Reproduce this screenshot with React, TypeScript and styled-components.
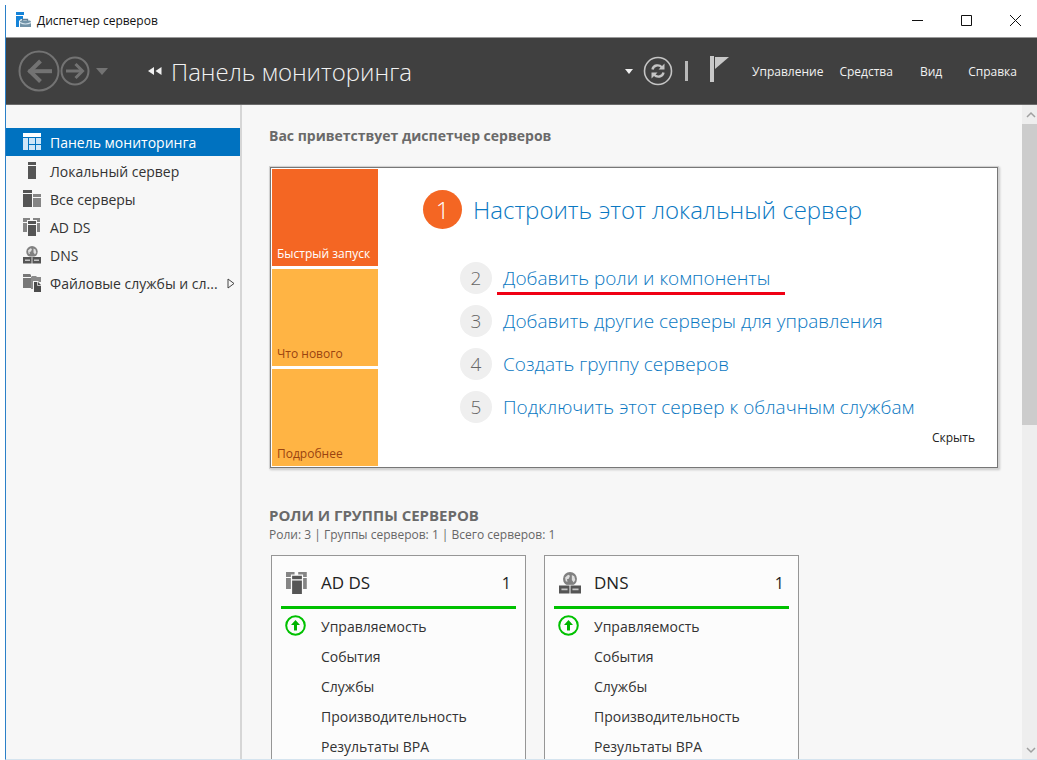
import React from 'react';
import styled, { createGlobalStyle, css } from 'styled-components';

const GlobalStyle = createGlobalStyle`
  *, *::before, *::after { box-sizing: border-box; }
  body { margin: 0; background: #fff; overflow: hidden; }
  body, button { font-family: "Open Sans", "Noto Sans", sans-serif; }
  button { padding: 0; border: 0; background: none; color: inherit; cursor: pointer; }
  a { text-decoration: none; }
  h1, h2, p, ul, ol { margin: 0; padding: 0; }
  ul, ol { list-style: none; }
  svg { display: block; flex: none; }
`;

const Desktop = styled.div`
  height: 100vh;
  padding: 5px 0 0 5px;
`;

const AppWindow = styled.div`
  height: 100%;
  display: flex;
  flex-direction: column;
  border-left: 1px solid #2b80c8;
  border-bottom: 1px solid #d5e4ef;
`;

const TitleBar = styled.header`
  flex: none;
  height: 33px;
  display: flex;
  align-items: center;
  padding: 0 16px 2px 9px;
  border-bottom: 1px solid #9a9a9a;
  color: #111;
  font-size: 12px;
`;

const TitleText = styled.span`
  flex: 1;
  margin-left: 6px;
`;

const WindowButton = styled.button`
  width: 12px;
  height: 30px;
  margin-left: 37px;
  display: grid;
  place-items: center;
`;

const Toolbar = styled.div`
  flex: none;
  height: 67px;
  display: flex;
  align-items: center;
  padding: 0 20px 0 12px;
  background: #404040;
  border-bottom: 1px solid #6b6b6b;
  color: #f2f2f2;
`;

const PageTitle = styled.h1`
  flex: 1;
  margin-left: 9px;
  padding-top: 2px;
  font-size: 24px;
  line-height: 32px;
  font-weight: 300;
  white-space: nowrap;
`;

const IconButton = styled.button<{ $gap?: number }>`
  margin-left: ${(p) => p.$gap ?? 0}px;
`;

const Divider = styled.span`
  width: 3px;
  height: 20px;
  margin: 0 22px 0 12px;
  background: #b9b9b9;
`;

const MenuBar = styled.nav`
  display: flex;
  margin-left: 23px;
  padding-top: 2px;
`;

const MenuButton = styled.button<{ $gap?: number }>`
  margin-left: ${(p) => p.$gap ?? 0}px;
  font-size: 12px;
  line-height: 20px;
`;

const Body = styled.div`
  flex: 1;
  min-height: 0;
  display: flex;
  background: #f7f7f7;
`;

const Sidebar = styled.nav`
  flex: none;
  width: 236px;
  padding-top: 23px;
  border-right: 2px solid #d6d6d6;
`;

const NavLink = styled.a<{ $active?: boolean }>`
  height: 28px;
  display: grid;
  grid-template-columns: 18px 1fr auto;
  column-gap: 9px;
  align-items: center;
  padding: 0 5px 0 17px;
  font-size: 14px;
  white-space: nowrap;
  color: #333;
  ${(p) => p.$active && css`
    margin-bottom: 1px;
    background: #0072c0;
    color: #fff;
  `}
`;

const Content = styled.main`
  flex: 1;
  min-width: 0;
  overflow: hidden;
  padding: 20px 24px 0 27px;
`;

const Heading = styled.h2`
  font-size: 14px;
  line-height: 22px;
  font-weight: 700;
  color: #6a6a6a;
`;

const Welcome = styled.section`
  display: flex;
  height: 301px;
  margin: 20px 0 0 1px;
  padding: 1px;
  background: #fff;
  border: 1px solid #777;
  box-shadow: 0 0 0 1px #d2d2d2, 1px 1px 2px 1px #c8c8c8;
`;

const Tiles = styled.div`
  flex: none;
  width: 106px;
  display: flex;
  flex-direction: column;
  gap: 3px;
`;

const Tile = styled.button<{ $active?: boolean }>`
  flex: 1;
  display: flex;
  align-items: flex-end;
  padding: 0 5px 3px;
  font-size: 12px;
  line-height: 18px;
  white-space: nowrap;
  background: ${(p) => (p.$active ? '#f46623' : '#ffb444')};
  color: ${(p) => (p.$active ? '#fff' : '#9a4310')};
`;

const Steps = styled.div`
  flex: 1;
  min-width: 0;
  display: flex;
  flex-direction: column;
  padding: 21px 21px 0 45px;
`;

const StepList = styled.ol`
  display: flex;
  flex-direction: column;
  gap: 11px;
  padding: 33px 0 0 37px;
`;

const Step = styled.li`
  display: flex;
  align-items: center;
  gap: 11px;
`;

const FirstStep = styled(Step).attrs({ as: 'div' })``;

const StepNumber = styled.span<{ $primary?: boolean }>`
  flex: none;
  display: grid;
  place-items: center;
  width: ${(p) => (p.$primary ? 39 : 32)}px;
  height: ${(p) => (p.$primary ? 39 : 32)}px;
  border-radius: 50%;
  font-size: ${(p) => (p.$primary ? 24 : 19)}px;
  font-weight: 300;
  background: ${(p) => (p.$primary ? '#f46623' : '#efefef')};
  color: ${(p) => (p.$primary ? '#fff' : '#666')};
`;

const StepLink = styled.a<{ $primary?: boolean; $marked?: boolean }>`
  position: relative;
  font-size: ${(p) => (p.$primary ? 24 : 19)}px;
  line-height: 32px;
  font-weight: 300;
  white-space: nowrap;
  color: #0a78c2;
  ${(p) => p.$marked && css`
    &::after {
      content: "";
      position: absolute;
      left: -6px;
      right: -14px;
      bottom: -1px;
      height: 3px;
      background: #f00014;
    }
  `}
`;

const HideButton = styled.button`
  align-self: flex-end;
  margin-top: 5px;
  font-size: 12px;
  line-height: 20px;
  color: #222;
`;

const RolesHeading = styled(Heading)`
  margin-top: 36px;
  font-size: 15px;
`;

const Summary = styled.p`
  margin-top: 1px;
  font-size: 12px;
  line-height: 16px;
  color: #666;
`;

const Cards = styled.div`
  display: flex;
  gap: 18px;
  margin: 12px 0 0 2px;
`;

const Card = styled.section`
  flex: none;
  width: 255px;
  height: 240px;
  padding: 0 9px;
  background: #fcfcfc;
  border: 1px solid #969696;
`;

const CardHeader = styled.header`
  height: 53px;
  display: flex;
  align-items: center;
  gap: 13px;
  padding: 3px 5px 0 5px;
  border-bottom: 3px solid #00c100;
  font-size: 17px;
  color: #222;
`;

const CardTitle = styled.span`
  flex: 1;
`;

const CardCount = styled.span`
  font-size: 16px;
`;

const CardRow = styled.li`
  height: 30px;
  display: grid;
  grid-template-columns: 22px 1fr;
  column-gap: 14px;
  align-items: center;
  padding-left: 4px;
`;

const CardList = styled.ul`
  padding-top: 2px;
`;

const CardLink = styled.a`
  grid-column: 2;
  font-size: 14px;
  color: #333;
`;

const ScrollTrack = styled.div`
  flex: none;
  width: 15px;
  display: flex;
  flex-direction: column;
  background: #eeeeee;
`;

const ScrollButton = styled.button`
  height: 19px;
  padding-left: 4px;
`;

const ScrollThumb = styled.div`
  flex: 0 0 46%;
  margin-bottom: auto;
  background: #cccccc;
`;

const AppIcon = () => (
  <svg width="16" height="16" viewBox="0 0 16 16">
    <path d="M1 0h8v3H1zM1 4h7v3H6L4 9v6H1z" fill="#1583d8" />
    <path d="M7.500 9V7.500h5V9" fill="none" stroke="#5e7f96" strokeWidth="1.300" />
    <path d="M5 9.500q0-1 1-1h8.500q1 0 1.500 1V15H5z" fill="#7293a8" />
    <path d="M5 10.500q5.500 3 11 0" fill="none" stroke="#d6e6ef" strokeWidth="1.200" />
  </svg>
);

const BackIcon = () => (
  <svg width="42" height="42" viewBox="0 0 42 42" fill="none" stroke="#737373">
    <circle cx="21" cy="21" r="19.500" strokeWidth="2" />
    <path d="M10.500 21.200H34" strokeWidth="4" />
    <path d="M22.500 11L12 21.200l10.500 10.300" strokeWidth="4" />
  </svg>
);

const ForwardIcon = () => (
  <svg width="30" height="30" viewBox="0 0 30 30" fill="none" stroke="#737373">
    <circle cx="15" cy="15" r="13.500" strokeWidth="2" />
    <path d="M6 15h16.500" strokeWidth="3" />
    <path d="M15.500 8l7 7-7 7" strokeWidth="3" />
  </svg>
);

const Caret = ({ color, width, height }: { color: string; width: number; height: number }) => (
  <svg width={width} height={height} viewBox="0 0 10 6" preserveAspectRatio="none">
    <path d="M0 0h10L5 6z" fill={color} />
  </svg>
);

const DoubleLeft = () => (
  <svg width="14" height="8" viewBox="0 0 14 8">
    <path d="M6 0v8L0 4zM13.500 0v8l-6-4z" fill="#f0f0f0" />
  </svg>
);

const RefreshIcon = () => (
  <svg width="30" height="30" viewBox="0 0 30 30" fill="none" stroke="#c4c4c4">
    <circle cx="15" cy="15" r="13.500" strokeWidth="1.600" />
    <path d="M9.500 13.500c.8-4.500 6.500-5.300 9.300-2.200M20.500 16.500c-.8 4.500-6.500 5.300-9.300 2.200" strokeWidth="2.400" />
    <path d="M21.500 7.500v6h-6zM8.500 22.500v-6h6z" fill="#c4c4c4" stroke="none" />
  </svg>
);

const FlagIcon = () => (
  <svg width="19" height="30" viewBox="0 0 19 30" fill="#c8c8c8">
    <path d="M0 0h4v26H0z" />
    <path d="M5 1h14L5 13z" />
  </svg>
);

const DashboardIcon = () => (
  <svg width="18" height="18" viewBox="0 0 18 18">
    <path d="M0 0h18v4H0z" fill="#fff" />
    <path d="M0 5h5v12H0zM6 5h6v6H6zM13 5h5v6h-5zM6 12h6v5H6zM13 12h5v5h-5z" fill="#cfe6f8" />
  </svg>
);

const ServerIcon = () => (
  <svg width="18" height="18" viewBox="0 0 18 18" fill="#555">
    <path d="M5 0h8v3H5zM5 4h8v13H5z" />
  </svg>
);

const ServersIcon = () => (
  <svg width="18" height="18" viewBox="0 0 18 18" fill="#555">
    <path d="M0 0h9v3H0zM0 4h9v13H0z" />
    <path d="M10 4h8v3h-8zM10 8h8v9h-8z" fill="#858585" />
  </svg>
);

const AdDsIcon = ({ size = 18 }: { size?: number }) => (
  <svg width={size} height={size} viewBox="0 0 18 18">
    <path d="M0 0h7v2H4v2H0zM10 0h7v4h-3V2h-4zM0 5h4v9H0zM14 5h3v9h-3z" fill="#858585" />
    <path d="M5 3h8v3H5zM5 7h8v11H5z" fill="#555" />
  </svg>
);

const DnsIcon = ({ size = 18 }: { size?: number }) => (
  <svg width={size} height={size} viewBox="0 0 18 18">
    <circle cx="9" cy="5.700" r="5.700" fill="#808080" />
    <path d="M5 4.500l2.500-2.300L9 3 8 5.500 6.500 6l.5 2-1.500-.5zM10.500 2.500l2 1 .8 3-1.300 2-1.500-2z" fill="#dedede" />
    <path d="M0 10.500h18v1H0z" fill="#f7f7f7" />
    <path d="M0 11h8.600v6.500H0zM9.400 11H18v6.500H9.400z" fill="#555" />
    <path d="M2 13.500h5V15H2zM11 13.500h5V15h-5z" fill="#c4c4c4" />
  </svg>
);

const FilesIcon = () => (
  <svg width="18" height="18" viewBox="0 0 18 18">
    <path d="M0 0h7l1 1v2H0zM0 4h8v10H0z" fill="#777" />
    <path d="M9 2h4l1 1h4v5h-2l-1-1h-5v8H8V3z" fill="#8a8a8a" />
    <path d="M11 8h4l3 3v7h-7z" fill="#4c4c4c" />
    <path d="M14.500 8v3.500H18" fill="none" stroke="#e8e8e8" strokeWidth=".8" />
  </svg>
);

const ExpandIcon = () => (
  <svg width="8" height="11" viewBox="0 0 8 11">
    <path d="M1 1l6 4.500L1 10z" fill="none" stroke="#444" />
  </svg>
);

const StatusIcon = () => (
  <svg width="22" height="22" viewBox="0 0 22 22">
    <circle cx="10.500" cy="10.500" r="9.300" fill="none" stroke="#00c100" strokeWidth="2" />
    <path d="M10.500 5l4.500 5h-3v5.500H9V10H6z" fill="#00b400" />
  </svg>
);

const Chevron = ({ down }: { down?: boolean }) => (
  <svg width="10" height="8" viewBox="0 0 10 8" fill="none" stroke="#a0a0a0" strokeWidth="1.500">
    <path d={down ? 'M1 2l4 4 4-4' : 'M1 6l4-4 4 4'} />
  </svg>
);

const navItems = [
  { label: 'Панель мониторинга', icon: <DashboardIcon />, active: true },
  { label: 'Локальный сервер', icon: <ServerIcon /> },
  { label: 'Все серверы', icon: <ServersIcon /> },
  { label: 'AD DS', icon: <AdDsIcon /> },
  { label: 'DNS', icon: <DnsIcon /> },
  { label: 'Файловые службы и сл...', icon: <FilesIcon />, expandable: true },
];

const steps = [
  'Добавить роли и компоненты',
  'Добавить другие серверы для управления',
  'Создать группу серверов',
  'Подключить этот сервер к облачным службам',
];

const roles = [
  { name: 'AD DS', icon: <AdDsIcon size={22} /> },
  { name: 'DNS', icon: <DnsIcon size={22} /> },
];

const rows = ['Управляемость', 'События', 'Службы', 'Производительность', 'Результаты BPA'];

export default function App() {
  return (
    <Desktop>
      <GlobalStyle />
      <AppWindow>
        <TitleBar>
          <AppIcon />
          <TitleText>Диспетчер серверов</TitleText>
          <WindowButton aria-label="Свернуть">
            <svg width="11" height="11" viewBox="0 0 11 11"><path d="M0 5.500h11" stroke="#111" /></svg>
          </WindowButton>
          <WindowButton aria-label="Развернуть">
            <svg width="11" height="11" viewBox="0 0 11 11"><path d="M.5.500h10v10H.5z" fill="none" stroke="#111" /></svg>
          </WindowButton>
          <WindowButton aria-label="Закрыть">
            <svg width="11" height="11" viewBox="0 0 11 11"><path d="M0 0l11 11M11 0L0 11" stroke="#111" /></svg>
          </WindowButton>
        </TitleBar>
        <Toolbar>
          <IconButton aria-label="Назад"><BackIcon /></IconButton>
          <IconButton aria-label="Вперед"><ForwardIcon /></IconButton>
          <IconButton aria-label="Журнал" $gap={6}><Caret color="#737373" width={12} height={7} /></IconButton>
          <IconButton aria-label="К началу" $gap={40}><DoubleLeft /></IconButton>
          <PageTitle>Панель мониторинга</PageTitle>
          <IconButton aria-label="Параметры обновления"><Caret color="#f0f0f0" width={8} height={5} /></IconButton>
          <IconButton aria-label="Обновить" $gap={10}><RefreshIcon /></IconButton>
          <Divider />
          <IconButton aria-label="Уведомления"><FlagIcon /></IconButton>
          <MenuBar>
            <MenuButton>Управление</MenuButton>
            <MenuButton $gap={16}>Средства</MenuButton>
            <MenuButton $gap={27}>Вид</MenuButton>
            <MenuButton $gap={26}>Справка</MenuButton>
          </MenuBar>
        </Toolbar>
        <Body>
          <Sidebar>
            {navItems.map((item) => (
              <NavLink key={item.label} href="#" $active={item.active}>
                {item.icon}
                <span>{item.label}</span>
                {item.expandable && <ExpandIcon />}
              </NavLink>
            ))}
          </Sidebar>
          <Content>
            <Heading>Вас приветствует диспетчер серверов</Heading>
            <Welcome>
              <Tiles>
                <Tile $active>Быстрый запуск</Tile>
                <Tile>Что нового</Tile>
                <Tile>Подробнее</Tile>
              </Tiles>
              <Steps>
                <FirstStep>
                  <StepNumber $primary>1</StepNumber>
                  <StepLink href="#" $primary>Настроить этот локальный сервер</StepLink>
                </FirstStep>
                <StepList>
                  {steps.map((step, i) => (
                    <Step key={step}>
                      <StepNumber>{i + 2}</StepNumber>
                      <StepLink href="#" $marked={i === 0}>{step}</StepLink>
                    </Step>
                  ))}
                </StepList>
                <HideButton>Скрыть</HideButton>
              </Steps>
            </Welcome>
            <RolesHeading>РОЛИ И ГРУППЫ СЕРВЕРОВ</RolesHeading>
            <Summary>Роли: 3 | Группы серверов: 1 | Всего серверов: 1</Summary>
            <Cards>
              {roles.map((role) => (
                <Card key={role.name}>
                  <CardHeader>
                    {role.icon}
                    <CardTitle>{role.name}</CardTitle>
                    <CardCount>1</CardCount>
                  </CardHeader>
                  <CardList>
                    {rows.map((row, i) => (
                      <CardRow key={row}>
                        {i === 0 && <StatusIcon />}
                        <CardLink href="#">{row}</CardLink>
                      </CardRow>
                    ))}
                  </CardList>
                </Card>
              ))}
            </Cards>
          </Content>
          <ScrollTrack>
            <ScrollButton aria-label="Вверх"><Chevron /></ScrollButton>
            <ScrollThumb />
            <ScrollButton aria-label="Вниз"><Chevron down /></ScrollButton>
          </ScrollTrack>
        </Body>
      </AppWindow>
    </Desktop>
  );
}
